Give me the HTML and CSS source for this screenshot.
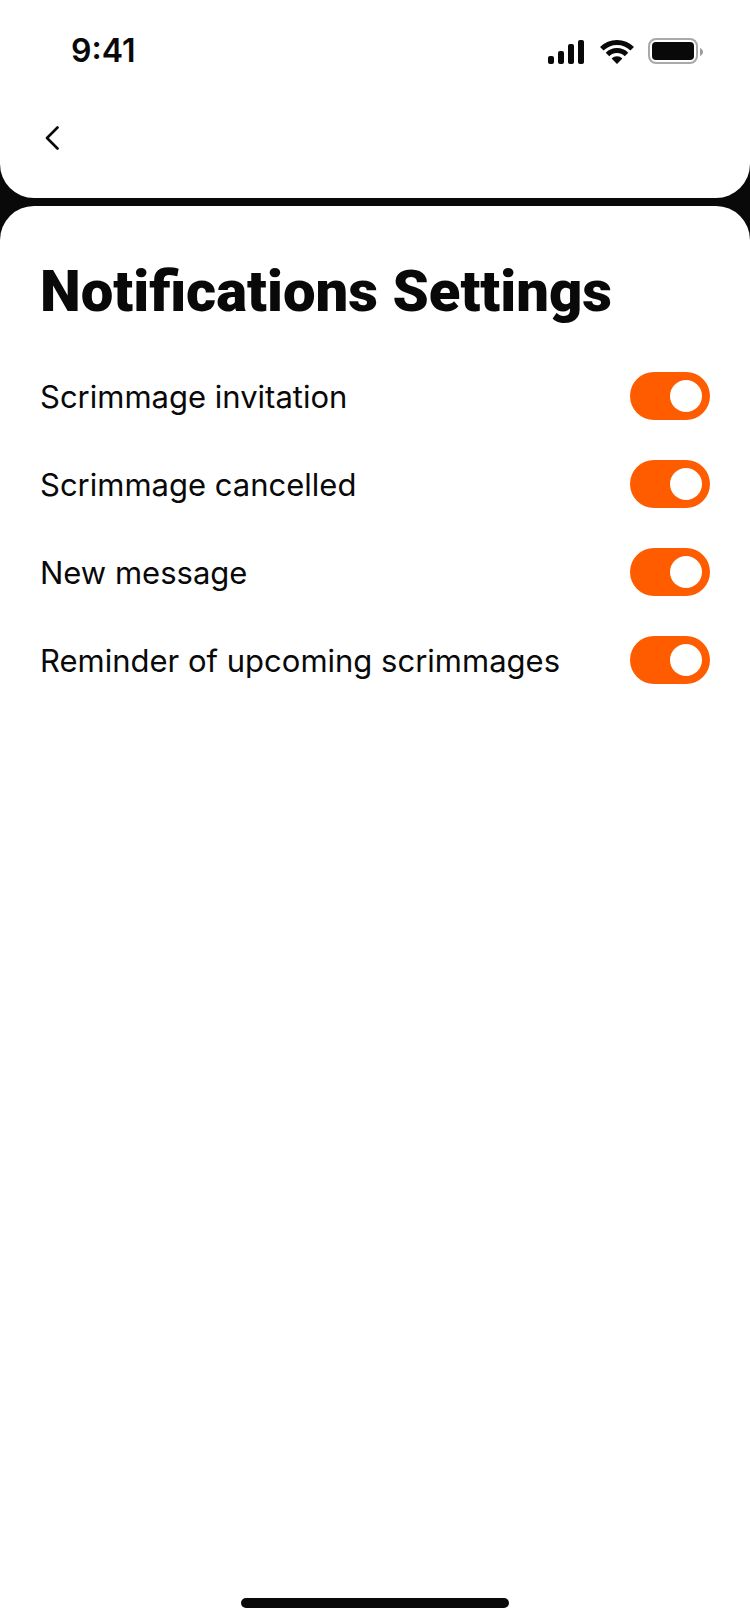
FILE: index.html
```html
<!DOCTYPE html>
<html lang="en">
    <head>
        <meta charset="utf-8">
        <meta name="viewport" content="width=device-width, initial-scale=1">
        <link rel="stylesheet" href="styles.css">
        <title>Notifications Settings</title>
    </head>

    <body>
        <header class="top-bar">
            <div class="status-bar">
                <span class="status-time">9:41</span>
                <svg class="status-icons" width="156" height="26" viewBox="0 0 156 26" fill="currentColor" aria-hidden="true">
                    <!-- signal -->
                    <rect x="0" y="18" width="6" height="8" rx="2"/>
                    <rect x="10" y="13" width="6" height="13" rx="2"/>
                    <rect x="20" y="6" width="6" height="20" rx="2"/>
                    <rect x="30" y="2" width="6" height="24" rx="2"/>
                    <!-- wifi -->
                    <g fill="none" stroke="currentColor" stroke-width="5">
                        <path d="M53.8 10.8a21.5 21.5 0 0 1 30.4 0"/>
                        <path d="M59.5 16.5a13.5 13.5 0 0 1 19 0"/>
                    </g>
                    <path d="M69 26l-5.4-5.4a7.6 7.6 0 0 1 10.8 0z"/>
                    <!-- battery -->
                    <rect x="101" y="1" width="48" height="24" rx="7" fill="none" stroke="currentColor" stroke-width="2" opacity=".35"/>
                    <rect x="104" y="4" width="42" height="18" rx="4"/>
                    <path d="M152 10c4 1.5 4 6.5 0 8z" opacity=".4"/>
                </svg>
            </div>
            <nav class="nav-bar">
                <button class="back-button" type="button" aria-label="Back">
                    <svg width="24" height="24" viewBox="0 0 24 24" fill="none" stroke="currentColor" stroke-width="2.6" stroke-linecap="round" stroke-linejoin="round">
                        <path d="M17.5 1.5L7 12l10.500 10.500"/>
                    </svg>
                </button>
            </nav>
        </header>

        <main class="settings">
            <h1>Notifications Settings</h1>
            <form class="settings-list">
                <div class="setting">
                    <label for="invitation">Scrimmage invitation</label>
                    <input class="toggle" type="checkbox" role="switch" id="invitation" checked>
                </div>
                <div class="setting">
                    <label for="cancelled">Scrimmage cancelled</label>
                    <input class="toggle" type="checkbox" role="switch" id="cancelled" checked>
                </div>
                <div class="setting">
                    <label for="message">New message</label>
                    <input class="toggle" type="checkbox" role="switch" id="message" checked>
                </div>
                <div class="setting">
                    <label for="reminder">Reminder of upcoming scrimmages</label>
                    <input class="toggle" type="checkbox" role="switch" id="reminder" checked>
                </div>
            </form>
            <div class="home-indicator"></div>
        </main>
    </body>
</html>
```
FILE: styles.css
```css
* {
    box-sizing: border-box;
}

body {
    margin: 0;
    min-height: 100vh;
    display: flex;
    flex-direction: column;
    gap: 8px;
    background-color: #090909;
    color: #090909;
    font-family: Inter, "Liberation Sans", sans-serif;
}

/* Header */
.top-bar {
    padding-bottom: 20px;
    background-color: white;
    border-radius: 0 0 34px 34px;
}

.status-bar {
    display: flex;
    justify-content: space-between;
    align-items: center;
    height: 98px;
    padding: 4px 46px 0 71px;
}

.status-time {
    font-size: 32px;
    line-height: 40px;
    font-weight: 600;
}

.nav-bar {
    display: flex;
    align-items: center;
    height: 80px;
    padding: 0 40px;
}

.back-button {
    display: flex;
    padding: 0;
    border: none;
    background: none;
    color: inherit;
    cursor: pointer;
}

/* Settings */
.settings {
    flex: 1;
    display: flex;
    flex-direction: column;
    padding: 40px 40px 16px;
    background-color: white;
    border-radius: 34px 34px 0 0;
}

h1 {
    margin: 0 0 40px;
    padding-top: 4px;
    font-family: Roboto, "Liberation Sans", sans-serif;
    font-size: 58px;
    line-height: 82px;
    font-weight: 900;
}

.settings-list {
    display: flex;
    flex-direction: column;
    gap: 40px;
}

.setting {
    display: flex;
    justify-content: space-between;
    align-items: center;
    gap: 20px;
}

.setting label {
    padding-top: 2px;
    font-size: 31px;
    line-height: 46px;
    font-weight: 400;
}

.toggle {
    appearance: none;
    flex: none;
    display: flex;
    width: 80px;
    height: 48px;
    margin: 0;
    padding: 8px;
    border-radius: 24px;
    background-color: #bbb;
    cursor: pointer;
}

.toggle::before {
    content: '';
    width: 32px;
    height: 32px;
    border-radius: 50%;
    background-color: white;
}

.toggle:checked {
    justify-content: flex-end;
    background-color: #ff5c00;
}

.home-indicator {
    width: 268px;
    height: 10px;
    margin: auto auto 0;
    border-radius: 5px;
    background-color: #090909;
}
```
